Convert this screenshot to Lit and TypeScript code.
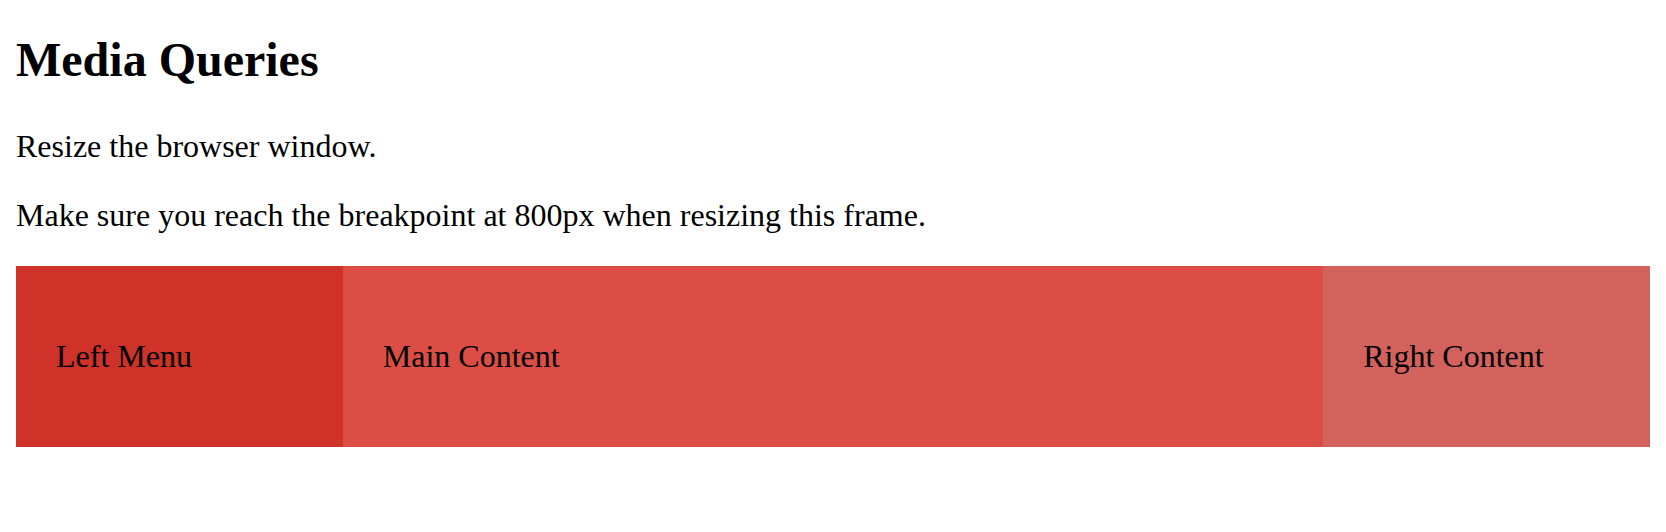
import { LitElement, html, css } from "lit";
import { customElement } from "lit/decorators.js";

@customElement("app-root")
export class AppRoot extends LitElement {
  static styles = css`
    :host {
      display: block;
      padding: 32px 16px;
      background: #fff;
      color: #000;
      font-family: "Liberation Serif", "Times New Roman", serif;
      font-size: 32px;
      line-height: 37px;
    }
    .title {
      margin: 0 0 40px;
      font-size: 48px;
      line-height: 56px;
      font-weight: bold;
    }
    .text {
      margin: 0 0 32px;
    }
    .row {
      display: grid;
      grid-template-columns: 1fr 3fr 1fr;
    }
    .column {
      min-width: 0;
      padding: 72px 40px;
    }
    .column p {
      margin: 0;
    }
    .left {
      background: #ce3228;
    }
    .main {
      background: #dc4d46;
    }
    .right {
      background: #d3625d;
    }
    @media (max-width: 800px) {
      .row {
        grid-template-columns: 1fr;
      }
    }
  `;

  render() {
    return html`
      <h2 class="title">Media Queries</h2>
      <p class="text">Resize the browser window.</p>
      <p class="text">Make sure you reach the breakpoint at 800px when resizing this frame.</p>
      <div class="row">
        <nav class="column left"><p>Left Menu</p></nav>
        <main class="column main"><p>Main Content</p></main>
        <aside class="column right"><p>Right Content</p></aside>
      </div>
    `;
  }
}
